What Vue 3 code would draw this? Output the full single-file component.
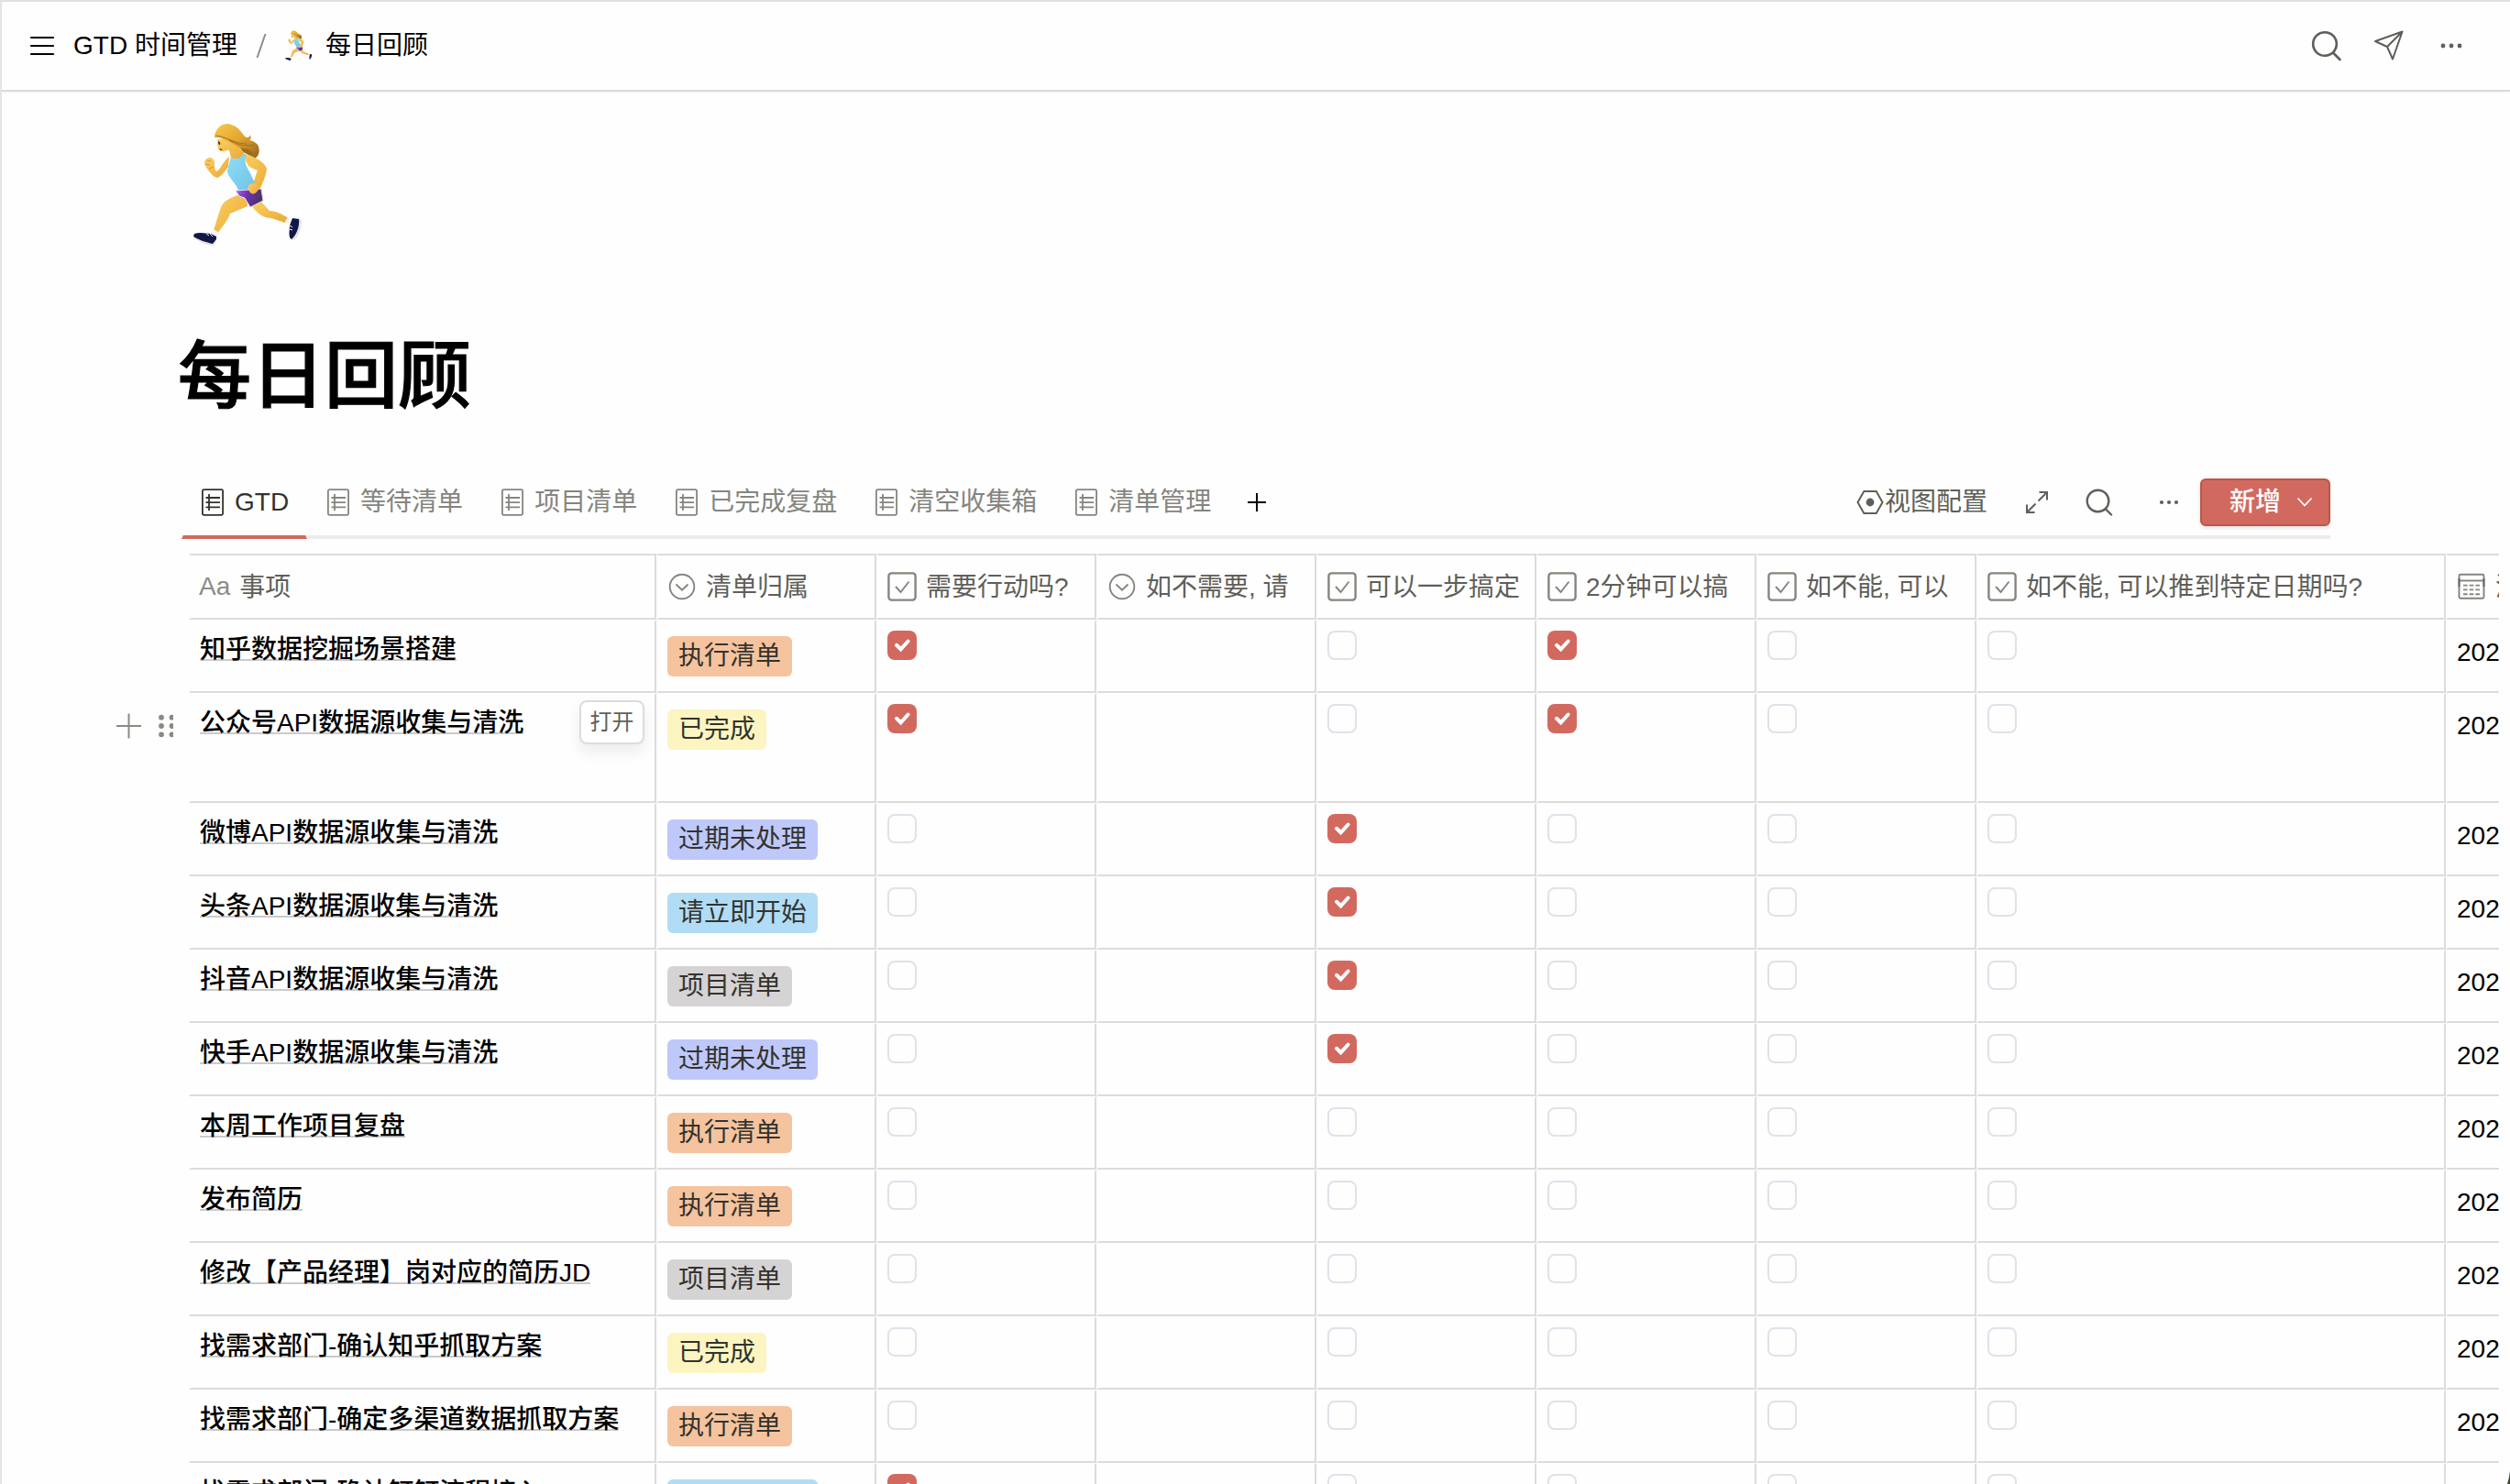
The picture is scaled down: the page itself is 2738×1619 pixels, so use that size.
<script setup>
const tabs = ['GTD', '等待清单', '项目清单', '已完成复盘', '清空收集箱', '清单管理']

const columns = [
  { type: 'text', label: '事项', width: 510 },
  { type: 'select', label: '清单归属', width: 240 },
  { type: 'check', label: '需要行动吗?', width: 240 },
  { type: 'select', label: '如不需要, 请', width: 240 },
  { type: 'check', label: '可以一步搞定', width: 240 },
  { type: 'check', label: '2分钟可以搞', width: 240 },
  { type: 'check', label: '如不能, 可以', width: 240 },
  { type: 'check', label: '如不能, 可以推到特定日期吗?', width: 512 },
  { type: 'date', label: '添加日期', width: 240 },
]

const tagColors = {
  执行清单: '#f5c39e',
  已完成: '#fcf5c1',
  过期未处理: '#bfc8fa',
  请立即开始: '#b1dcf6',
  项目清单: '#d6d3d5',
}

const rows = [
  { title: '知乎数据挖掘场景搭建', tag: '执行清单', checks: [1, 0, 1, 0, 0] },
  { title: '公众号API数据源收集与清洗', tag: '已完成', checks: [1, 0, 1, 0, 0], active: true },
  { title: '微博API数据源收集与清洗', tag: '过期未处理', checks: [0, 1, 0, 0, 0] },
  { title: '头条API数据源收集与清洗', tag: '请立即开始', checks: [0, 1, 0, 0, 0] },
  { title: '抖音API数据源收集与清洗', tag: '项目清单', checks: [0, 1, 0, 0, 0] },
  { title: '快手API数据源收集与清洗', tag: '过期未处理', checks: [0, 1, 0, 0, 0] },
  { title: '本周工作项目复盘', tag: '执行清单', checks: [0, 0, 0, 0, 0] },
  { title: '发布简历', tag: '执行清单', checks: [0, 0, 0, 0, 0] },
  { title: '修改【产品经理】岗对应的简历JD', tag: '项目清单', checks: [0, 0, 0, 0, 0] },
  { title: '找需求部门-确认知乎抓取方案', tag: '已完成', checks: [0, 0, 0, 0, 0] },
  { title: '找需求部门-确定多渠道数据抓取方案', tag: '执行清单', checks: [0, 0, 0, 0, 0] },
  { title: '找需求部门-确认钉钉流程接入', tag: '请立即开始', checks: [1, 0, 0, 0, 0] },
]

// Checkbox values follow the order of the checkbox columns.
const checkIndex = { 2: 0, 4: 1, 5: 2, 6: 3, 7: 4 }
</script>

<template>
  <div class="page">
    <svg width="0" height="0" class="defs">
      <defs>
        <linearGradient id="skin" x1="0" y1="0" x2="1" y2="1">
          <stop offset="0" stop-color="#fbd062" />
          <stop offset="1" stop-color="#e9a936" />
        </linearGradient>
        <linearGradient id="hair" x1="0" y1="0" x2="1" y2="1">
          <stop offset="0" stop-color="#f9cb4c" />
          <stop offset="0.5" stop-color="#e2a52f" />
          <stop offset="1" stop-color="#96621c" />
        </linearGradient>
        <linearGradient id="top" x1="0" y1="0" x2="1" y2="1">
          <stop offset="0" stop-color="#8fdcf8" />
          <stop offset="1" stop-color="#6fc4e6" />
        </linearGradient>
        <linearGradient id="shorts" x1="0" y1="0" x2="1" y2="0.3">
          <stop offset="0" stop-color="#a565ec" />
          <stop offset="0.5" stop-color="#6d2fae" />
          <stop offset="1" stop-color="#4a3468" />
        </linearGradient>
      </defs>
      <symbol id="runner" viewBox="0 0 120 134">
        <path fill="#9c6a1e" d="M42 20C50 28 56 31 61 34L67 38C73 36 74 28 71 23C68 19 62 18 56 19L44 16Z" />
        <path fill="url(#skin)" d="M56 33C66 34 79 42 81 49C80 58 76 65 73 73C70 79 64 78 61 74C60 70 62 67 66 65C68 61 69 55 71 51L62 47Q56 39 56 33Z" />
        <path fill="url(#skin)" d="M40 36C32 42 31 50 26 52C24 50 24 47 24 43C24 38 21 37 18 37C14 38 12 41 14 46C17 51 22 58 27 59C32 57 36 51 39 47Z" />
        <path fill="none" stroke="#c98b25" stroke-width="0.8" d="M16 40L20 41M14 44L19 45M18 49L23 47" />
        <path fill="url(#skin)" d="M50 78C42 80 34 84 31 91L23 116L28 119C33 111 39 105 41 98L60 90L59 80Z" />
        <path fill="url(#skin)" d="M65 90C71 99 79 103 86 103L101 108L105 103C96 98 91 95 84 95L74 84Z" />
        <path fill="#f4f4f5" d="M23 115L29 119L27 124L20 120ZM101 106L105 101L109 106L104 110Z" />
        <path fill="#e7e2df" d="M1 122L2 125C8 129 15 132 22 133L26 129L24 126ZM114 103L119 105C119 112 117 122 111 127L106 126Z" />
        <path fill="#111747" d="M2 120C8 118 16 120 20 120L26 123L26 126L22 131C14 129 5 126 1 123ZM109 103L116 104C117 111 114 121 108 126C104 124 106 116 106 111Z" />
        <path stroke="#f4f4f5" stroke-width="1" fill="none" d="M15 120L18 122M19 120L22 123M106 111L109 113M106 115L109 116" />
        <path fill="url(#shorts)" stroke="#e5dcf2" stroke-width="1" d="M47 73L75 71L77 84L63 91L57 81L51 79Z" />
        <path fill="url(#skin)" d="M27 17C27 23 27 29 31 30C36 31 37 28 40 29L42 37C47 40 54 38 57 33L50 23L36 16Z" />
        <path fill="url(#top)" d="M42 36C44 40 52 39 56 33L59 34C55 42 60 48 63 54L68 65C63 66 61 69 60 72L50 72C46 63 38 58 38 51Z" />
        <path fill="url(#skin)" d="M61 72C59 66 65 64 69 66L72 71C70 77 64 79 61 72Z" />
        <path fill="#3b2416" d="M28 19Q31 20 30 23Q28 23 28 19ZM29 27L33 28L31 29Z" />
        <path fill="url(#hair)" d="M24 13C26 4 32 0 38 0C47 1 52 7 57 14C60 16 62 15 63 12C64 15 64 17 62 18C69 19 73 24 72 29C71 33 69 36 67 37C66 31 62 27 55 27C47 25 42 20 34 17C31 15 27 15 24 15Z" />
        <path fill="none" stroke="#a97020" stroke-width="1.1" d="M25 13C38 14 45 22 59 22M40 18C51 24 60 25 68 23" />
      </symbol>
    </svg>

    <header class="topbar">
      <svg class="burger" width="28" height="24" viewBox="0 0 28 24">
        <path d="M2 3H26M2 12H26M2 21H26" stroke="#000" stroke-width="2.2" stroke-linecap="round" />
      </svg>
      <span class="crumb">GTD 时间管理</span>
      <svg class="slash" width="12" height="28" viewBox="0 0 12 28">
        <path d="M10.5 1L1.5 27" stroke="#8c8c88" stroke-width="2" />
      </svg>
      <svg class="mini" width="30" height="34"><use href="#runner" /></svg>
      <span class="crumb">每日回顾</span>
      <div class="top-actions">
        <svg width="34" height="34" viewBox="0 0 34 34" fill="none" stroke="#5f5f59" stroke-width="2.6" stroke-linecap="round">
          <circle cx="15" cy="15" r="12.8" /><path d="M24.5 25L31.5 32" />
        </svg>
        <svg class="send" width="34" height="34" viewBox="0 0 34 34" fill="none" stroke="#5f5f59" stroke-width="2" stroke-linejoin="round">
          <path d="M2 12L31.5 1.5L21 31.5L15 18ZM15 18L31.5 1.5" />
        </svg>
        <svg class="more" width="24" height="8" viewBox="0 0 24 8" fill="#5f5f59">
          <circle cx="3" cy="4" r="2.4" /><circle cx="12" cy="4" r="2.4" /><circle cx="21" cy="4" r="2.4" />
        </svg>
      </div>
    </header>

    <main class="content">
      <svg class="cover" width="120" height="134"><use href="#runner" /></svg>
      <h1>每日回顾</h1>

      <nav class="toolbar">
        <div v-for="(tab, i) in tabs" :key="tab" class="tab" :class="{ current: i === 0 }">
          <svg width="24" height="30" viewBox="0 0 24 30" fill="none" stroke="currentColor">
            <rect x="0.9" y="1.2" width="22.2" height="27.6" rx="1.5" stroke-width="1.8" />
            <path d="M4.5 10H20M4.5 15.2H20M4.5 20.4H20M8 6V24" stroke-width="1.8" />
          </svg>
          <span>{{ tab }}</span>
        </div>
        <svg class="add-tab" width="20" height="20" viewBox="0 0 20 20">
          <path d="M0 10H20M10 0V20" stroke="#000" stroke-width="2" />
        </svg>
        <div class="tools">
          <svg width="30" height="28" viewBox="0 0 30 28" fill="none" stroke="#5f5f59" stroke-width="2">
            <path d="M8.3 2H21.7L28.5 14L21.7 26H8.3L1.5 14Z" /><circle cx="15" cy="14" r="4.4" fill="#5f5f59" stroke="none" />
          </svg>
          <span class="config">视图配置</span>
          <svg class="expand" width="26" height="26" viewBox="0 0 26 26" fill="none" stroke="#5f5f59" stroke-width="2">
            <path d="M15.5 2H24V10.5M24 2L14.5 11.5M2 15.5V24H10.5M2 24L11.5 14.5" />
          </svg>
          <svg class="find" width="30" height="30" viewBox="0 0 30 30" fill="none" stroke="#5f5f59" stroke-width="2.4" stroke-linecap="round">
            <circle cx="13.5" cy="13.5" r="11.8" /><path d="M22 22.5L28 28.5" />
          </svg>
          <svg class="dots" width="22" height="8" viewBox="0 0 22 8" fill="#5f5f59">
            <circle cx="3" cy="4" r="2.1" /><circle cx="11" cy="4" r="2.1" /><circle cx="19" cy="4" r="2.1" />
          </svg>
          <button class="create">
            <span>新增</span>
            <svg width="18" height="12" viewBox="0 0 18 12" fill="none" stroke="#fff" stroke-width="1.8">
              <path d="M1.5 1.5L9 9.5L16.5 1.5" />
            </svg>
          </button>
        </div>
      </nav>

      <section class="table">
        <div class="row head">
          <div v-for="(col, c) in columns" :key="c" class="cell" :style="{ width: col.width + 'px' }">
            <span v-if="col.type === 'text'" class="aa">Aa</span>
            <svg v-else width="32" height="32" viewBox="0 0 32 32" fill="none" stroke="#85857f" stroke-width="1.9">
              <template v-if="col.type === 'select'">
                <circle cx="16" cy="16" r="13.3" /><path d="M9.5 13.5L16 19.7L22.5 13.5" />
              </template>
              <template v-else-if="col.type === 'check'">
                <rect x="1.4" y="1.4" width="29.2" height="29.2" rx="3" stroke-width="2.4" />
                <path d="M9 16L14.5 22L23.5 10.5" />
              </template>
              <template v-else>
                <rect x="2.5" y="2.8" width="27" height="26" rx="1.5" />
                <path d="M2.5 9.5H29.5" />
                <path d="M2.5 7V16M29.5 7V16" stroke="#66665f" />
                <path d="M7 14.6H25M7 19.4H25M7 24.2H25" stroke-dasharray="4.6 2.1" />
              </template>
            </svg>
            <span class="label">{{ col.label }}</span>
          </div>
        </div>

        <div v-for="(row, r) in rows" :key="r" class="row" :class="{ tall: row.active }">
          <div v-if="row.active" class="handle">
            <svg width="62" height="28" viewBox="0 0 62 28" fill="#8a8a84">
              <path d="M0 14H27M13.5 0.5V27.5" stroke="#8a8a84" stroke-width="2" />
              <circle v-for="n in 6" :key="n" :cx="n % 2 ? 49 : 61 - 0.5" :cy="4.7 + Math.floor((n - 1) / 2) * 9.3" r="2.9" />
            </svg>
          </div>
          <div v-for="(col, c) in columns" :key="c" class="cell" :style="{ width: col.width + 'px' }">
            <span v-if="c === 0" class="title">{{ row.title }}</span>
            <button v-if="c === 0 && row.active" class="open">打开</button>
            <span v-if="c === 1" class="tag" :style="{ background: tagColors[row.tag] }">{{ row.tag }}</span>
            <span v-if="col.type === 'check'" class="box" :class="{ on: row.checks[checkIndex[c]] }">
              <svg v-if="row.checks[checkIndex[c]]" width="32" height="32" viewBox="0 0 32 32">
                <path d="M10 15.8L14.6 20.3L22.6 11.5" fill="none" stroke="#fff" stroke-width="4" stroke-linecap="round" />
              </svg>
            </span>
            <span v-if="col.type === 'date'" class="date">202</span>
          </div>
        </div>
      </section>
    </main>

    <svg class="corner" width="3" height="14" viewBox="0 0 3 14">
      <path d="M3 0V14H0Q2 8 3 0Z" fill="#3d4a22" />
    </svg>
  </div>
</template>

<style>
html,
body {
  margin: 0;
  overflow: hidden;
  background: #fff;
}
</style>

<style scoped>
.page {
  position: relative;
  box-sizing: border-box;
  width: 2738px;
  height: 1619px;
  overflow: hidden;
  border-top: 2px solid #e0e0e0;
  border-left: 2px solid #e3e3e8;
  background: #fefefe;
  font-family: 'Liberation Sans', 'Noto Sans CJK SC', sans-serif;
  font-size: 28px;
  line-height: 40px;
  color: #000;
}
.defs {
  position: absolute;
}
.corner {
  position: absolute;
  right: 0;
  bottom: 0;
}
svg {
  display: block;
  flex: none;
}
button {
  font: inherit;
  padding: 0;
}
.topbar {
  display: flex;
  align-items: center;
  box-sizing: border-box;
  height: 98px;
  padding-left: 30px;
  border-bottom: 2px solid #dadada;
  box-shadow: 0 1px 2px rgba(0, 0, 0, 0.05);
}
.burger {
  margin-right: 20px;
}
.crumb {
  white-space: pre;
}
.slash {
  margin: 0 20px;
}
.mini {
  margin-right: 14px;
}
.top-actions {
  display: flex;
  align-items: center;
  margin-left: auto;
  margin-right: 52px;
}
.send {
  margin-left: 34px;
}
.more {
  margin-left: 39px;
}
.content {
  padding-left: 196px;
}
.cover {
  margin: 35px 0 0 12px;
}
h1 {
  margin: 82px 0 0 -4px;
  font-size: 80px;
  line-height: 120px;
  font-weight: 500;
  -webkit-text-stroke: 1.2px #000;
}
.toolbar {
  display: flex;
  box-sizing: border-box;
  width: 2344px;
  height: 82px;
  margin-top: 35px;
  border-bottom: 4px solid #ebebeb;
}
.tab {
  display: flex;
  align-items: center;
  box-sizing: border-box;
  height: 82px;
  padding: 3px 18px 0 20px;
  gap: 12px;
  color: #85857f;
  border: 4px solid transparent;
  border-width: 2px 2px 4px;
}
.tab.current {
  color: #33332e;
  border-bottom-color: #d2685e;
}
.add-tab {
  margin: 32px 0 0 20px;
}
.tools {
  display: flex;
  align-items: center;
  height: 52px;
  margin: 16px 0 0 auto;
  color: #5f5f59;
}
.config {
  margin-left: 1px;
}
.expand {
  margin-left: 41px;
}
.find {
  margin-left: 40px;
}
.dots {
  margin-left: 50px;
}
.create {
  display: flex;
  align-items: center;
  box-sizing: border-box;
  width: 142px;
  height: 52px;
  margin-left: 23px;
  padding-left: 30px;
  gap: 17px;
  color: #fff;
  font-weight: 500;
  background: #d2695f;
  border: 2px solid #b95748;
  border-radius: 6px;
  box-shadow: 0 2px 4px rgba(0, 0, 0, 0.12);
}
.table {
  width: 2520px;
  margin: 16px 0 0 8px;
  clip-path: inset(0 0 0 -100px);
}
.row {
  display: flex;
  position: relative;
  height: 80px;
}
.row.tall {
  height: 120px;
}
.cell {
  box-sizing: border-box;
  flex: none;
  position: relative;
  padding: 10px 0 0 10px;
  border: 2px solid transparent;
  border-right-color: #dcdcdc;
  border-bottom-color: #dcdcdc;
  white-space: nowrap;
}
.row.head {
  height: 72px;
}
.head .cell {
  display: flex;
  align-items: center;
  padding-top: 0;
  gap: 10px;
  overflow: hidden;
  color: #5f5f59;
  border-top-color: #dcdcdc;
}
.label {
  padding-top: 1px;
}
.aa {
  margin-left: -1px;
  color: #8c8c86;
}
.title {
  display: block;
  width: max-content;
  height: 30px;
  margin-top: 1px;
  line-height: 40px;
  font-weight: 500;
  border-bottom: 2px solid #cbcbcb;
}
.tag {
  display: block;
  width: max-content;
  height: 44px;
  margin-top: 6px;
  padding: 0 12px;
  border-radius: 6px;
  line-height: 43px;
  color: #33332e;
}
.box {
  display: block;
  box-sizing: border-box;
  width: 32px;
  height: 32px;
  border: 2px solid #dfe2e8;
  border-radius: 8px;
}
.box.on {
  border: 0;
  background: #d2695f;
}
.date {
  display: block;
  margin-top: 4px;
}
.handle {
  position: absolute;
  left: -79px;
  top: 22px;
}
.open {
  position: absolute;
  box-sizing: border-box;
  right: 11px;
  top: 6px;
  width: 71px;
  height: 48px;
  font-size: 24px;
  line-height: 40px;
  color: #5f5f59;
  background: #fff;
  border: 2px solid #dcdcdc;
  border-radius: 8px;
  box-shadow: 0 8px 16px rgba(0, 0, 0, 0.08);
}
</style>
